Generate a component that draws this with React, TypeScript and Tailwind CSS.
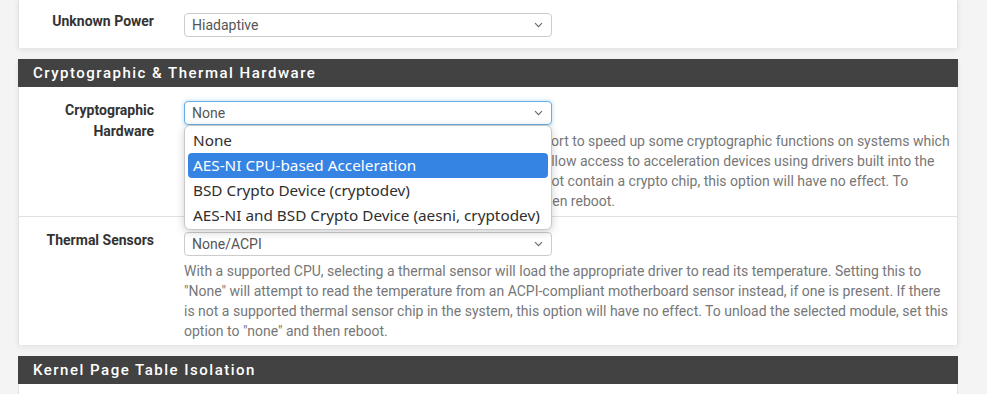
import React from "react"

const font = { fontFamily: "Roboto, 'Liberation Sans', sans-serif" }

function Chevron() {
  return (
    <svg width="9" height="6" viewBox="0 0 9 6" className="absolute right-[8px] top-1/2 -translate-y-1/2">
      <path d="M1 1.2l3.5 3.5 3.5-3.5" fill="none" stroke="#666" strokeWidth="1.1" />
    </svg>
  )
}

function Select({ value, focused }: { value: string; focused?: boolean }) {
  return (
    <div
      className={
        focused
          ? "relative h-[24px] w-[368px] rounded-[4px] border border-[#66afe9] bg-white pl-[7px] text-[14px] leading-[22px] text-[#555] shadow-[0_0_4px_rgba(102,175,233,0.5)]"
          : "relative h-[24px] w-[368px] rounded-[4px] border border-[#ccc] bg-white pl-[7px] text-[14px] leading-[22px] text-[#555]"
      }
    >
      {value}
      <Chevron />
    </div>
  )
}

function Header({ title }: { title: string }) {
  return (
    <div className="h-[28px] bg-[#424242] pl-[15px] text-[15px] font-medium leading-[28px] tracking-[1.5px] text-white">
      {title}
    </div>
  )
}

const options = [
  "None",
  "AES-NI CPU-based Acceleration",
  "BSD Crypto Device (cryptodev)",
  "AES-NI and BSD Crypto Device (aesni, cryptodev)",
]

export default function App() {
  return (
    <div className="h-[394px] w-[987px] overflow-hidden bg-[#f4f4f4] pl-[18px]" style={font}>
      {/* previous panel (cut off) */}
      <div className="w-[940px] border-x border-[#e2e2e2] bg-white pb-[11px] pt-[13px] shadow-[0_2px_6px_rgba(0,0,0,0.08)]">
        <div className="flex">
          <div className="-mt-[2px] w-[150px] pr-[15px] text-right text-[14px] font-bold leading-[20px] text-[#333]">
            Unknown Power
          </div>
          <div className="ml-[15px]">
            <Select value="Hiadaptive" />
          </div>
        </div>
      </div>

      <div className="mt-[11px] w-[940px] bg-white shadow-[0_2px_6px_rgba(0,0,0,0.08)]">
        <Header title="Cryptographic & Thermal Hardware" />
        <div className="border-x border-[#e2e2e2]">
          {/* Cryptographic hardware */}
          <div className="flex border-b border-[#e0e0e0] pb-[5px] pt-[14px]">
            <div className="-mt-[1px] w-[150px] pr-[15px] text-right text-[14px] font-bold leading-[21px] text-[#333]">
              Cryptographic
              <br />
              Hardware
            </div>
            <div className="relative ml-[15px] w-[768px]">
              <Select value="None" focused />
              <div className="mt-[6px] text-[14px] leading-[20px] text-[#777]">
                A cryptographic accelerator module will use hardware support to speed up some cryptographic functions on systems which
                have the chip. Loading the BSD Crypto Device module will allow access to acceleration devices using drivers built into the
                kernel, such as Hifn or ubsec chipsets. If the firewall does not contain a crypto chip, this option will have no effect. To
                unload the selected module, set this option to "none" and then reboot.
              </div>
              {/* open dropdown */}
              <div
                className="absolute left-0 top-[24px] z-10 w-[368px] rounded-[6px] border border-[#c8c8c8] bg-white px-[3px] pb-[1px] pt-[2px] shadow-[0_2px_8px_rgba(0,0,0,0.2)]"
                style={{ fontFamily: "'Noto Sans', 'DejaVu Sans', sans-serif" }}
              >
                {options.map((o, i) => (
                  <div
                    key={o}
                    className={
                      i === 1
                        ? "h-[25px] rounded-[4px] bg-[#3584e4] pl-[5px] text-[15.3px] leading-[25px] text-white"
                        : "h-[25px] pl-[5px] text-[15.3px] leading-[25px] text-[#2e2e2e]"
                    }
                  >
                    {o}
                  </div>
                ))}
              </div>
            </div>
          </div>

          {/* Thermal sensors */}
          <div className="flex pb-[4px] pt-[15px]">
            <div className="-mt-[2px] w-[150px] pr-[15px] text-right text-[14px] font-bold leading-[20px] text-[#333]">
              Thermal Sensors
            </div>
            <div className="ml-[15px] w-[768px]">
              <Select value="None/ACPI" />
              <div className="mt-[5px] text-[14px] leading-[20px] text-[#777]">
                With a supported CPU, selecting a thermal sensor will load the appropriate driver to read its temperature. Setting this to
                "None" will attempt to read the temperature from an ACPI-compliant motherboard sensor instead, if one is present. If there
                is not a supported thermal sensor chip in the system, this option will have no effect. To unload the selected module, set this
                option to "none" and then reboot.
              </div>
            </div>
          </div>
        </div>
      </div>

      <div className="mt-[11px] w-[940px] bg-white">
        <Header title="Kernel Page Table Isolation" />
        <div className="h-[40px] border-x border-[#e2e2e2]" />
      </div>
    </div>
  )
}
